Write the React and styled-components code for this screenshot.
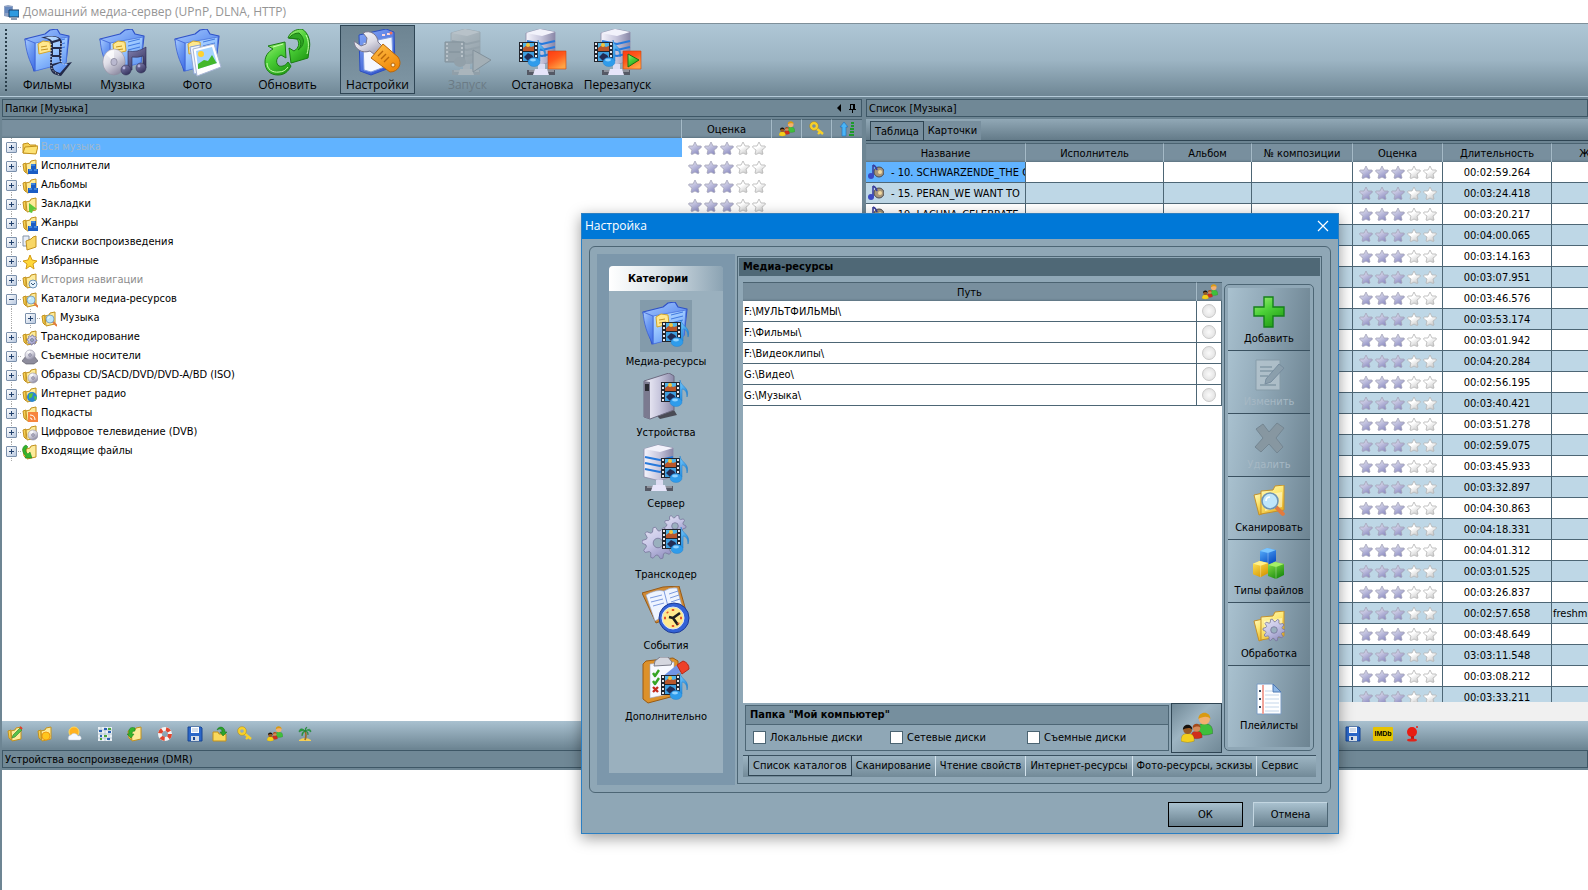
import React from "react"
import styled, { createGlobalStyle, css } from "styled-components"

const GlobalStyle = createGlobalStyle`
  * {
    box-sizing: border-box;
  }

  body {
    margin: 0;
    background: #6d8593;
    color: #000;
    font: 11px/13px "DejaVu Sans Condensed", Tahoma, sans-serif;
  }

  button, input {
    margin: 0;
    padding: 0;
    border: 0;
    background: none;
    color: inherit;
    font: inherit;
  }

  svg {
    display: block;
    flex: none;
  }
`

const line = "#3e5766"
const uiFont = `"Open Sans", "Noto Sans", sans-serif`

/* ---------- icons ---------- */

const Svg = ({ size = 16, box = size, children }) => (
  <svg width={size} height={size} viewBox={`0 0 ${box} ${box}`} aria-hidden="true">
    {children}
  </svg>
)

const Hidden = styled.svg`
  position: absolute;
`

const Grad = ({ id, from, mid, to, flat }) => (
  <linearGradient id={id} x1="0" y1="0" x2={flat ? 1 : 0.6} y2={flat ? 0 : 1}>
    <stop offset="0" stopColor={from} />
    {mid && <stop offset="0.5" stopColor={mid} />}
    <stop offset="1" stopColor={to} />
  </linearGradient>
)

const Gradients = () => (
  <Hidden width="0" height="0" aria-hidden="true">
    <defs>
      <Grad id="blue" from="#a9ccff" mid="#6f9cf3" to="#4a78e8" />
      <Grad id="deep" from="#86aaf8" to="#3457cf" />
      <Grad id="page" from="#c4e2ff" mid="#97c4ff" to="#6296f2" />
      <Grad id="yellow" from="#fffbc8" mid="#fde874" to="#e8b52c" />
      <Grad id="orange" from="#ffc04a" to="#f08a0a" />
      <Grad id="green" from="#a4f07a" mid="#4cd038" to="#25a018" />
      <Grad id="metal" from="#ffffff" mid="#dddce6" to="#8f8da4" />
      <Grad id="tower" from="#f5f4fc" mid="#c9c8de" to="#8a88a8" flat />
      <Grad id="violet" from="#8685b5" to="#37355f" />
      <Grad id="lilac" from="#e4e3f2" mid="#c9c8e8" to="#9796c4" />
      <Grad id="note" from="#7fd0ff" to="#1680d8" />
      <Grad id="red" from="#ff3a12" mid="#ff5a1c" to="#ffa445" />
      <Grad id="starOn" from="#e2e2ee" mid="#c2c2df" to="#8f8fc4" />
      <Grad id="starOff" from="#ffffff" mid="#ffffff" to="#cfcfcf" />
      <Grad id="cubeBlue" from="#5db4ff" to="#0a4fc4" />
      <Grad id="cubeGreen" from="#8be34a" to="#1c8d10" />
      <Grad id="cubeYellow" from="#ffe65c" to="#d89a06" />
      <Grad id="ghost" from="#b4bfc6" to="#94a2ab" />
    </defs>
  </Hidden>
)

const BlueFolder = () => (
  <g strokeLinejoin="round">
    <path d="m1 10 20-5 5-4 7-1 3 5 9 2-3 26-32 9Z" fill="url(#blue)" stroke="#2f52c8" strokeWidth="1.2" />
    <path d="m11 14 33-6-2 26-31 8Z" fill="url(#page)" stroke="#4a73dc" strokeWidth="0.8" />
    <path d="m1 10 10 4v28C5 32 2 22 1 10Z" fill="url(#blue)" stroke="#3a60d4" strokeWidth="0.8" />
    <path d="m14 15 5-3 7 1 1 9-12 3Z" fill="#ffe88f" stroke="#d2a52c" />
    <path d="m17 18 6-1m-6 4 7-1" stroke="#c59320" fill="none" />
    <path d="m29 13 12-3M29 17l12-3M29 21l12-3" stroke="#3f78e0" fill="none" />
  </g>
)

const FilmNote = ({ x = 19, y = 19 }) => (
  <g transform={`translate(${x} ${y})`}>
    <path d="M0 0h19v20H0Z" fill="#22252d" />
    <path d="M4 1h11v8H4Z" fill="#4fb4e8" />
    <path d="M4 10h11v9H4Z" fill="#3f9fe0" />
    <path d="m4 6 4-3 4 2 3-1v5H4Z" fill="#b9572c" />
    <circle cx="9" cy="3" r="2" fill="#f3c33c" />
    <path d="m5 15 4-4 4 2 2 3-6 3Z" fill="#222c54" />
    <path d="M2 1v18M17 1v18" stroke="#e9e9ee" strokeWidth="2" strokeDasharray="2 2" />
    <path d="M19-2c1 7 10 7 7 17 0-5-2-8-5-8v12h-2Z" fill="url(#note)" stroke="#1c7ccc" strokeWidth="0.5" />
    <ellipse cx="15" cy="20" rx="6" ry="4.5" fill="#2f9ceb" stroke="#1c7ccc" strokeWidth="0.4" />
    <ellipse cx="14" cy="18" rx="3" ry="1.4" fill="#8fd2ff" />
  </g>
)

const Server = ({ ghost }) => (
  <g strokeLinejoin="round">
    <path d="m7 4 14-4 15 3v28l-13 5-16-4Z" fill={ghost ? "url(#ghost)" : "url(#tower)"} stroke={ghost ? "#95a3ac" : "#8d8ca8"} strokeWidth="0.8" />
    <path d="m7 4 14-4 15 3-13 4Z" fill={ghost ? "#b8c2c9" : "#f2f2fb"} />
    <path d="m8 12 15 3 13-3M8 18l15 3 13-3M8 24l15 3 13-3" stroke={ghost ? "#94a2ab" : "#2679dc"} strokeWidth="2" fill="none" />
    <path d="M19 35h7v6h-7Z" fill={ghost ? "#a6b1b9" : "#dcdcf2"} />
    <path d="M8 41h28v5H8Z" fill={ghost ? "#909fa9" : "#555965"} />
    <path d="M10 42h8M28 42h7" stroke={ghost ? "#b0bbc2" : "#c7cad2"} />
    <path d="M16 40h12l2 6H14Z" fill={ghost ? "#aab5bc" : "#e6e5fa"} />
  </g>
)

const gearPath = (cx, cy, r, n) => {
  const pts = []
  for (let i = 0; i < n * 4; i++) {
    const a = (i / (n * 4)) * Math.PI * 2
    const k = i % 4 < 2 ? r : r * 0.76
    pts.push(`${(cx + Math.cos(a) * k).toFixed(1)} ${(cy + Math.sin(a) * k).toFixed(1)}`)
  }
  return `M${pts.join("L")}Z`
}

const Gear = ({ cx, cy, r, n = 9 }) => (
  <g>
    <path d={gearPath(cx, cy, r, n)} fill="url(#lilac)" stroke="#77769c" strokeWidth="0.8" strokeLinejoin="round" />
    <circle cx={cx} cy={cy} r={r * 0.3} fill="#9ab0be" stroke="#77769c" strokeWidth="0.8" />
  </g>
)

const Person = ({ x, y, s = 1, skin, hair, shirt }) => (
  <g transform={`translate(${x} ${y}) scale(${s})`}>
    <path d="M0 17c0-7 3-8 7-8s7 1 7 8q-7 3-14 0Z" fill={shirt} stroke="#00000055" strokeWidth="0.5" />
    <circle cx="7" cy="5" r="4.6" fill={skin} />
    <path d="M2 5c0-7 10-7 10 0-2-3-7-2-10 0Z" fill={hair} />
  </g>
)

const People = () => (
  <g>
    <Person x={15} y={1} s={1.2} skin="#f3b070" hair="#d99a12" shirt="#3fbf3c" />
    <Person x={10} y={12} s={0.8} skin="#d68a58" hair="#a14a1c" shirt="#cf2f1c" />
    <Person x={0} y={13} s={0.95} skin="#9a5a24" hair="#15110e" shirt="#f4cf1d" />
  </g>
)

const YellowFolder = () => (
  <g strokeLinejoin="round">
    <path d="m1 10 9-2 1 20-5 2Z" fill="url(#yellow)" stroke="#c4912a" />
    <path d="m8 6 12-1 2-4 9-1v25L8 29Z" fill="url(#yellow)" stroke="#c4912a" />
    <path d="m11 10 18-3v15l-17 4Z" fill="#fffbd6" opacity=".6" />
  </g>
)

const Lens = ({ x, y, r }) => (
  <g>
    <path d={`M${x + r * 0.7} ${y + r * 0.7}l${r * 0.9} ${r * 0.9}`} stroke="#e37b3e" strokeWidth={r * 0.5} strokeLinecap="round" />
    <circle cx={x} cy={y} r={r} fill="#bfe6fb" stroke="#6f94b4" strokeWidth={r * 0.2} />
    <path d={`M${x - r / 2} ${y}q0-${r / 2} ${r / 2}-${r / 2}`} stroke="#fff" strokeWidth={r * 0.2} fill="none" />
  </g>
)

const Cube = ({ x, y, s = 1, fill, top }) => (
  <g transform={`translate(${x} ${y}) scale(${s})`} strokeLinejoin="round">
    <path d="m0 3 7-3 9 2v11l-8 4-8-3Z" fill={fill} />
    <path d="m0 3 7-3 9 2-8 3Z" fill={top} />
    <path d="M8 5v12" stroke="#ffffff66" strokeWidth="0.8" />
  </g>
)

const Disc = ({ x, y, r }) => (
  <g>
    <circle cx={x} cy={y} r={r} fill="url(#metal)" stroke="#8f8da0" strokeWidth="0.6" />
    <path d={`M${x} ${y}L${x - r * 0.7} ${y - r * 0.6}A${r} ${r} 0 0 1 ${x} ${y - r * 0.9}Z`} fill="#fff" opacity=".7" />
    <circle cx={x} cy={y} r={r * 0.28} fill="#b9b8cf" stroke="#77768a" strokeWidth="0.6" />
  </g>
)

const big = {
  films: (
    <>
      <BlueFolder />
      <path d="M17 9c8-3 20-3 21 4l-1 20 3 2 8-2-11 14c-8-1-11-4-11-11l1-20c0-5-4-7-10-7Z" fill="#232a4a" />
      <path d="M21 9c5-2 11-2 14 1l-7 2c-1-2-4-3-7-3ZM29 14l7-2v6h-7ZM29 20h6v6h-6ZM28 28h7l1 5-8 2ZM29 37l7-3 8 1-8 9c-4-1-7-3-7-7Z" fill="url(#page)" />
      <path d="M27 15v20q0 8 9 11M37 14v18q1 4 6 3" stroke="#fff" strokeDasharray="1 2" fill="none" />
    </>
  ),
  music: (
    <>
      <BlueFolder />
      <g transform="translate(15 33) scale(0.86 1)">
        <Disc x={0} y={0} r={13} />
      </g>
      <path d="M29 22q9 2 18-4v21h-3V27q-5 2-11 1v13h-4Z" fill="url(#violet)" stroke="#2b294d" strokeWidth="0.6" />
      <circle cx="27" cy="41" r="5" fill="url(#violet)" stroke="#2b294d" strokeWidth="0.5" />
      <circle cx="42" cy="39" r="5" fill="url(#violet)" stroke="#2b294d" strokeWidth="0.5" />
      <circle cx="25" cy="39" r="1.4" fill="#b3b2dc" />
      <circle cx="40" cy="37" r="1.4" fill="#b3b2dc" />
    </>
  ),
  photo: (
    <>
      <BlueFolder />
      <path d="m16 18 10-2 2 28-8 1Z" fill="#eef4ff" stroke="#8fa6d6" />
      <path d="m19 20 21-5 7 23-24 9Z" fill="#fff" stroke="#a8b6d6" />
      <path d="m22 22 16-4 5 16-19 6Z" fill="#a6d4ff" />
      <circle cx="27" cy="25" r="3" fill="#ffd22e" />
      <path d="m24 35 6-4 4 1 4-6 4 7 1 1-19 6Z" fill="#43b82a" />
    </>
  ),
  refresh: (
    <g stroke="#1a7d12" strokeLinejoin="round" fill="url(#green)">
      <path d="m44 29-17 5-2-15 5 3c5-3 6-8 3-12l-9-1c2-6 8-9 14-9 7 4 9 14 7 21Z" />
      <path d="m25 9 10 1c3 3 2 8-1 11 6-4 8-11 1-17-4 0-8 2-10 5Z" fill="#2fa524" />
      <path d="m4 17 17-4 1 16-5-3c-6 3-5 9-2 11 4 1 7-1 9-4l3 4c-3 6-7 9-13 9C6 46 1 41 1 33c0-6 3-10 8-13Z" />
      <path d="M3 34c0 6 5 10 12 9 4 0 7-2 9-5" stroke="#caffae" fill="none" />
      <path d="m9 18 10-3M42 6c3 6 3 12 1 19" stroke="#caffae" fill="none" />
    </g>
  ),
  settings: (
    <g strokeLinejoin="round">
      <path d="m5 6 27-6 8 3 1 34-24 9-11-4Z" fill="url(#deep)" stroke="#2c4fc0" />
      <path d="m9 14 29-6 1 27-22 8-7-2Z" fill="#f4f7ff" stroke="#7d9ae0" />
      <path d="M28 6h3m2-1h3" stroke="#ffd9d9" strokeWidth="2" />
      <circle cx="37" cy="4" r="1.5" fill="#f0705a" />
      <path d="M9 4c7-4 15 2 15 9l9 9-7 8-10-8C8 25 0 20 0 12l7 5 5-2 1-6Z" fill="url(#metal)" stroke="#77768c" />
      <path d="m17 29 12-14 15 13c5 7 0 15-8 15Z" fill="url(#orange)" stroke="#b8660a" />
      <path d="m24 27 5-5m-2 8 5-5m-2 8 5-5" stroke="#b8660a" strokeWidth="1.4" />
      <circle cx="39" cy="36" r="2" fill="#fff0cc" stroke="#b8660a" />
    </g>
  ),
  start: (
    <g>
      <Server ghost />
      <path d="M1 13h19v20H1Z" fill="#94a2ab" stroke="#83929c" />
      <path d="M3 14v19M18 14v19" stroke="#b8c2c9" strokeWidth="2" strokeDasharray="2 2" />
      <path d="M5 23h11" stroke="#7f8e98" />
      <ellipse cx="16" cy="33" rx="6" ry="5" fill="#92a0a9" />
      <path d="m29 21 18 10-18 12Z" fill="#a3afb6" stroke="#82919b" strokeLinejoin="round" />
    </g>
  ),
  stop: (
    <>
      <Server />
      <FilmNote x={0} y={13} />
      <path d="M29 22h18v18H29Z" fill="url(#red)" stroke="#c9430f" strokeWidth="0.6" />
    </>
  ),
  restart: (
    <>
      <Server />
      <FilmNote x={0} y={13} />
      <path d="M29 22h18v18H29Z" fill="url(#red)" stroke="#c9430f" strokeWidth="0.6" />
      <path d="m34 25 11 6-11 7Z" fill="url(#green)" stroke="#197014" />
    </>
  ),
  resources: (
    <>
      <BlueFolder />
      <FilmNote x={20} y={20} />
    </>
  ),
  devices: (
    <>
      <path d="m14 42 18-5 3 5-17 4Z" fill="#4a4b55" />
      <path d="m2 8 25-8 5 3v34L8 46l-6-2Z" fill="url(#tower)" stroke="#6b6a80" strokeLinejoin="round" />
      <path d="m2 8 6 1v37l-6-2Z" fill="#7b7a90" />
      <path d="M3 11h4v7H3Z" fill="#2a2b33" />
      <FilmNote x={19} y={9} />
    </>
  ),
  server: (
    <>
      <g transform="translate(-5 1)">
        <Server />
      </g>
      <FilmNote x={19} y={14} />
    </>
  ),
  transcoder: (
    <>
      <Gear cx={33} cy={11} r={11} />
      <Gear cx={16} cy={28} r={16} n={10} />
      <FilmNote x={20} y={14} />
    </>
  ),
  events: (
    <g strokeLinejoin="round">
      <path d="M0 7 21 1l16-1 7 25-30 12Z" fill="#d08a34" stroke="#965a18" />
      <path d="M4 9q10-6 18-4 6-4 13-3l6 22q-8 0-13 5-6 0-15 6Z" fill="#eef4ff" stroke="#8fa6d4" strokeWidth="0.6" />
      <path d="m22 5 6 23M8 12l12-3M9 16l12-3m-10 7 11-3M27 8l9-3m-8 7 9-3m-8 7 9-3" stroke="#7d9be0" fill="none" />
      <circle cx="32" cy="32" r="15" fill="#3462d6" stroke="#1c3a96" />
      <circle cx="31" cy="32" r="11" fill="#ffe98c" stroke="#d8e4ff" />
      <path d="m38 27-7 5 5 7m-5-7-4-1" stroke="#1d1d1d" strokeWidth="2.6" fill="none" />
      <path d="M31 23v2m0 14v2m-9-9h2m14 0h2m-15-6 1 1m10 10 1 1" stroke="#e4572a" strokeWidth="2.4" />
    </g>
  ),
  extra: (
    <g strokeLinejoin="round">
      <path d="m4 4 27-3 5 3v34L6 46l-5-4V7Z" fill="#dd912a" stroke="#9a5b12" />
      <path d="m8 7 24-2v31L8 41Z" fill="#f7f9ff" stroke="#9aa8c8" strokeWidth="0.6" />
      <path d="m13 4 5-4h8l4 5-1 3-17 1Z" fill="#d5d7df" stroke="#7b7d8a" />
      <path d="m11 16 2 3 4-6M11 24l2 3 4-6" stroke="#35a423" strokeWidth="2.4" fill="none" />
      <path d="m11 30 5 5m0-5-5 5" stroke="#c62a1c" strokeWidth="2.4" />
      <path d="m20 20 16-13 5 6-16 12Z" fill="#7195e6" />
      <path d="m35 8 6-4q6 2 6 8l-7 5Z" fill="#ee4128" stroke="#b52a18" />
      <FilmNote x={19} y={18} />
    </g>
  ),
}

const mid = {
  add: <path d="M11 1h9v10h11v9H20v11h-9V20H1v-9h10Z" fill="url(#green)" stroke="#15801a" strokeWidth="1.4" />,
  edit: (
    <g opacity=".8">
      <path d="M3 1h24v30H3Z" fill="#b6c5ce" stroke="#8499a6" />
      <path d="M7 8h12M7 12h14M7 17h8M7 26h16" stroke="#8ea2ae" strokeWidth="2" />
      <path d="m13 20 13-15 5 4-13 14-6 2Z" fill="#8c9fac" stroke="#73889a" />
    </g>
  ),
  remove: <path d="m3 7 7-5 6 8 8-9 7 5-8 10 7 9-6 6-8-9-8 8-6-5 8-9Z" fill="#8797a1" stroke="#748692" strokeLinejoin="round" />,
  scan: (
    <>
      <YellowFolder />
      <Lens x={17} y={16} r={8} />
    </>
  ),
  types: (
    <>
      <Cube x={7} y={0} fill="url(#cubeBlue)" top="#7cc6ff" />
      <Cube x={0} y={13} s={0.95} fill="url(#cubeYellow)" top="#fff08a" />
      <Cube x={15} y={14} fill="url(#cubeGreen)" top="#a6ee68" />
    </>
  ),
  process: (
    <>
      <YellowFolder />
      <Gear cx={21} cy={19} r={11} n={10} />
    </>
  ),
  playlists: (
    <>
      <path d="M4 1h16l8 8v22H4Z" fill="#fdfeff" stroke="#7a9cc4" />
      <path d="M20 1v8h8Z" fill="#8fb8e6" stroke="#4d78b4" />
      <path d="M12 8h7m-7 4h14m-14 4h14m-14 4h14m-14 4h14m-14 4h14" stroke="#c4d6ea" />
      <path d="M10 2v29" stroke="#f0a49a" strokeWidth="2" />
      <path d="M6 8h2m-2 8h2m-2 8h2" stroke="#3b4a5e" strokeWidth="2" />
    </>
  ),
  people: <People />,
}

const SmallFolder = () => (
  <g stroke="#c2911d" strokeLinejoin="round">
    <path d="m1 5 3-1v10l-2-2Z" fill="#f5cf55" />
    <path d="m4 5 4-1 1-2 5-1v12l-9 2Z" fill="#fdeb9a" />
  </g>
)

const boxes = (
  <g>
    <path d="M9 5h5v5H9ZM6 10h5v5H6ZM11 10h5v5h-5Z" fill="#1a5cc4" />
    <path d="M9 6h4M7 11h3m2 0h3" stroke="#66b0f5" />
  </g>
)

const small = {
  open: (
    <g stroke="#c2911d" strokeLinejoin="round">
      <path d="M1 13V4l5-1 2 2h6v8Z" fill="#f5cf55" />
      <path d="m1 13 2-6 13-1-2 8Z" fill="#fde274" />
    </g>
  ),
  boxes: <><SmallFolder />{boxes}</>,
  bookmark: <><SmallFolder /><path d="m7 15V6l8 6-4 1-1 3Z" fill="#5cc83a" /></>,
  lists: <><path d="M1 1h6v10H1Z" fill="#e8eef8" stroke="#8594a8" /><path d="m4 6 5-2 2-2 3-1v11l-9 3Z" fill="#f8d766" stroke="#c2911d" /></>,
  favorite: <path d="m8 1 2 5 5 1-4 3 1 5-4-3-4 3 1-5-4-3 5-1Z" fill="#ffd83a" stroke="#d49a12" strokeLinejoin="round" />,
  history: <><SmallFolder /><circle cx="11" cy="11" r="4" fill="#e6f2fb" stroke="#6b93b8" /><path d="m9 10 2 2 2-2" stroke="#34597c" fill="none" /></>,
  catalog: <><SmallFolder /><Lens x={9} y={8} r={4} /></>,
  transcode: <><SmallFolder /><Gear cx={10} cy={10} r={5} n={8} /></>,
  drive: <><path d="m0 12 4-5h8l4 5-4 3H4Z" fill="#8d8c9c" stroke="#55545f" strokeWidth="0.6" /><Disc x={8} y={6} r={5} /></>,
  disc: <><SmallFolder /><Disc x={11} y={10} r={5} /></>,
  radio: <><SmallFolder /><circle cx="10" cy="10" r="5" fill="#2a86d2" /><path d="m7 7 4-1-1 4-3 2ZM12 9l3 1-2 4Z" fill="#5cc83a" /></>,
  podcast: <><SmallFolder /><path d="M6 6h10v10H6Z" fill="#f7853e" /><path d="M8 9q5 0 5 5M8 12q2 0 2 2" stroke="#fff" fill="none" /></>,
  incoming: <><SmallFolder /><path d="M4 1C-1 3 0 9 4 12l-1 2 7 0-2-6-2 2C3 8 3 5 6 3Z" fill="#35b42c" stroke="#187a18" strokeWidth="0.5" /></>,
  track: (
    <>
      <circle cx="11" cy="8" r="5" fill="#a5957a" stroke="#4b4a50" />
      <circle cx="12" cy="8" r="2" fill="#f2d9a0" />
      <path d="M5 1v11M5 1q3 1 4 5" stroke="#3a3f9c" strokeWidth="1.6" fill="none" />
      <circle cx="3" cy="12" r="3" fill="#3a49c4" />
    </>
  ),
  pencilFolder: <><SmallFolder /><path d="m5 12 1-3 7-7 2 2-7 7Z" fill="#56c24a" stroke="#2a7f2a" strokeWidth="0.6" /><path d="m13 1 2 2" stroke="#e23b2a" strokeWidth="2" /></>,
  sunFolder: <><SmallFolder /><circle cx="9" cy="10" r="4" fill="#ffc61e" stroke="#f09a12" /></>,
  weather: <><circle cx="7" cy="6" r="5" fill="#ffb21e" stroke="#ffd85c" /><path d="M2 14a3 3 0 0 1 2-5 4 4 0 0 1 7 1 2 2 0 0 1 2 4Z" fill="#f5f8fc" stroke="#b8c6d4" strokeWidth="0.5" /></>,
  grid: <><path d="M1 1h14v14H1Z" fill="#eaf0f4" /><path d="M1 4h14M1 8h14M1 12h14M4 1v14M8 1v14M12 1v14" stroke="#9ab4c4" strokeWidth="0.6" /><path d="M2 5h3M7 3h3M11 6h3M3 10h2M10 13h3" stroke="#2a62b4" strokeWidth="2" /><path d="M7 10h3M3 13h2M11 3h3" stroke="#4aa83a" strokeWidth="2" /></>,
  importFolder: <><SmallFolder /><path d="M8 2C3 0 1 4 2 8H0l4 4 3-4H5c0-2 1-3 3-3Z" fill="#35b42c" stroke="#187a18" strokeWidth="0.5" /></>,
  lifebuoy: <><circle cx="8" cy="8" r="5" fill="none" stroke="#f4f4f4" strokeWidth="4" /><circle cx="8" cy="8" r="5" fill="none" stroke="#e0462e" strokeWidth="4" strokeDasharray="4 4" /></>,
  floppy: <><path d="M1 1h13l1 1v13H1Z" fill="#2a66c8" stroke="#174594" /><path d="M4 1h8v6H4Z" fill="#fff" /><path d="M5 3h6M5 5h6" stroke="#a9bcd8" /><path d="M4 10h8v5H4Z" fill="#d3dbe6" /><path d="M6 11h2v3H6Z" fill="#174594" /></>,
  exportFolder: <><path d="M1 15V6h5l1 2h7v7Z" fill="#f9d95c" stroke="#c2911d" /><path d="M5 4c2-5 8-3 8 2h2l-4 4-3-4h2c0-3-2-4-5-2Z" fill="#2ba42b" stroke="#187018" strokeWidth="0.5" /></>,
  key: <g fill="none" stroke="#b98a0c"><circle cx="5" cy="5" r="3" stroke="#f7d029" strokeWidth="2.4" /><path d="m7 7 7 6m-3-2-2 2" stroke="#f7d029" strokeWidth="2.4" /><circle cx="5" cy="5" r="4.4" strokeWidth="0.5" /></g>,
  people: <g transform="scale(0.5)"><People /></g>,
  palm: <><path d="M2 14q6-4 12 0v1H2Z" fill="#f5cf55" /><path d="M8 5q2 4 0 9" stroke="#9a6a24" strokeWidth="1.6" fill="none" /><path d="M8 5C5 1 2 3 2 6q3-2 6-1-4 1-3 5 1-3 3-5 3 1 3 4 1-4-3-4 3-2 6 1 0-5-6-1l2-4q-2 0-2 4Z" fill="#27a03a" stroke="#1c8030" strokeWidth="0.5" /></>,
  sort: <><path d="m5 1 4 5H7v9H3V6H1Z" fill="#4ab4f5" stroke="#1c6cb8" strokeWidth="0.6" /><path d="M12 2h3M12 5h3M11 8h4M11 11h4M10 14h5" stroke="#1f9a2c" strokeWidth="2" /></>,
  ball: <><circle cx="7" cy="6" r="5" fill="#e81c12" /><circle cx="12" cy="1" r="1" fill="#e81c12" /><path d="M6 10h3v3H6Z" fill="#c01610" /><ellipse cx="7" cy="14" rx="5" ry="1.6" fill="#e0241a" /></>,
}

const starPath = "m7 1 2 4 4 0c1 1 0 2-3 4l1 4c-1 1-2 0-4-1-2 1-3 2-4 1l1-4C1 7 0 6 1 5l4 0Z"

const StarRow = styled.span`
  display: flex;
  gap: 2px;
`

const Rating = ({ value = 3 }) => (
  <StarRow role="img" aria-label={`${value} / 5`}>
    {[1, 2, 3, 4, 5].map((n) => (
      <Svg key={n} size={14}>
        <path
          d={starPath}
          fill={n <= value ? "url(#starOn)" : "url(#starOff)"}
          stroke={n <= value ? "#a3a3b8" : "#b4b4b4"}
          strokeWidth="0.8"
          strokeLinejoin="round"
        />
      </Svg>
    ))}
  </StarRow>
)

/* ---------- window ---------- */

const Window = styled.div`
  position: relative;
  display: flex;
  flex-direction: column;
  height: 100vh;
  overflow: hidden;
`

const TitleBar = styled.header`
  display: flex;
  align-items: center;
  gap: 4px;
  height: 23px;
  padding-left: 3px;
  background: #fff;
  color: #959595;
  font: 12px/16px ${uiFont};
`

const Toolbar = styled.nav`
  display: flex;
  height: 74px;
  padding: 1px 0 2px 5px;
  border-top: 1px solid #7f909a;
  border-bottom: 1px solid #b4cad8;
  background: linear-gradient(#afc7d6, #9db5c4 50%, #6e8694);
`

const Grip = styled.span`
  align-self: center;
  width: 2px;
  height: 62px;
  margin-right: 3px;
  background: repeating-linear-gradient(#2b3f4c 0 2px, transparent 2px 4px);
`

const ToolGroup = styled.div`
  display: flex;
  margin-right: 15px;
`

const ToolButton = styled.button`
  display: flex;
  flex-direction: column;
  align-items: center;
  width: 75px;
  padding-top: 3px;
  font: 12px/16px ${uiFont};
  border: 1px solid transparent;

  ${({ $active }) =>
    $active &&
    css`
      border-color: #2f4655;
      background: linear-gradient(#6d8492, #8097a5);
    `}

  &:disabled {
    color: #6b7b85;
  }
`

const Panes = styled.main`
  display: flex;
  flex: 1;
  gap: 4px;
  min-height: 0;
  padding: 2px 0 0 2px;
`

const Pane = styled.section`
  display: flex;
  flex-direction: column;
  min-width: 0;
  flex: ${({ $width }) => ($width ? `0 0 ${$width}px` : 1)};
`

const PaneTitle = styled.h2`
  display: flex;
  flex: none;
  align-items: center;
  justify-content: space-between;
  height: 18px;
  margin: 0 0 2px;
  padding: 0 4px 0 2px;
  border: 1px solid ${line};
  background: #708896;
  font-size: 11px;
  font-weight: normal;
`

const PaneActions = styled.span`
  display: flex;
  gap: 4px;
`

const Body = styled.div`
  flex: 1;
  min-height: 0;
  overflow: hidden;
  background: #fff;
`

const Table = styled.table`
  width: ${({ $width }) => $width || "100%"};
  table-layout: fixed;
  border-collapse: separate;
  border-spacing: 0;
`

const Th = styled.th`
  height: 19px;
  padding: 0;
  border-right: 1px solid #a5bac7;
  border-top: 1px solid #4b6371;
  background: #788f9e;
  box-shadow: inset 0 -2px 2px -1px #5d7482;
  font-weight: normal;
  text-align: center;

  &:last-child {
    border-right: 0;
  }

  svg {
    margin: 0 auto;
  }
`

const TreeCell = styled.td`
  height: 19px;
  padding: 0;

  & > ${StarRow} {
    padding-left: 6px;
  }
`

const TreeRow = styled.div`
  display: flex;
  align-items: center;
  height: 19px;
  padding-left: ${({ $level }) => ($level ? 23 : 4)}px;
  background: ${({ $level }) =>
    $level ? "repeating-linear-gradient(#aaa 0 1px, transparent 1px 2px) 9px 0 / 1px 100% no-repeat" : "none"};
`

const Branch = styled.span`
  display: flex;
  align-items: center;
  width: 16px;
  height: 19px;
  background:
    repeating-linear-gradient(#aaa 0 1px, transparent 1px 2px) 5px 0 / 1px 100% no-repeat,
    repeating-linear-gradient(90deg, #aaa 0 1px, transparent 1px 2px) 0 9px / 100% 1px no-repeat;
`

const Expander = styled.button`
  display: flex;
  width: 11px;
  height: 11px;
  border: 1px solid #7b90ab;
  border-radius: 1px;
  background: linear-gradient(135deg, #fff, #b9c9e0);
`

const TreeLabel = styled.span`
  flex: 1;
  margin-left: 2px;
  padding: 2px 1px 4px;
  color: ${({ $muted }) => ($muted ? "#8c8c8c" : "inherit")};

  ${({ $selected }) =>
    $selected &&
    css`
      background: #61b3ff;
      color: #9fb8cd;
    `}
`

const IconBar = styled.div`
  display: flex;
  flex: none;
  align-items: center;
  height: 27px;
  padding: 0 0 2px ${({ $start = 0 }) => $start}px;
  background: linear-gradient(#a9c1d0, #6f8795);
`

const IconButton = styled.button`
  display: flex;
  justify-content: center;
  width: ${({ $narrow }) => ($narrow ? 20 : 30)}px;
`

const BarIcons = styled.div`
  display: flex;
  margin-left: -2px;
`

const Imdb = styled.span`
  padding: 0 1px;
  border-radius: 1px;
  background: #e6c300;
  font: bold 7px/14px "Liberation Sans Narrow", "Liberation Sans", sans-serif;
`

const TabStrip = styled.div`
  display: flex;
  flex: none;
  height: 22px;
  margin-bottom: 2px;
  padding: 2px 0 0 4px;
  border-bottom: 1px solid #2f4553;
  background: linear-gradient(#91a8b6, #647b89);
`

const ListTab = styled.button`
  padding: 0 4px;
  background: #788f9e;
  border: solid #2f4553;
  border-width: ${({ $active }) => ($active ? "1px 1px 0" : 0)};
`

const Td = styled.td`
  height: 21px;
  padding: 0 1px;
  border: 1px solid #4d6675;
  border-top: 0;
  border-left: 0;
  overflow: hidden;
  white-space: nowrap;
  text-align: ${({ $center }) => ($center ? "center" : "left")};
  background: ${({ $selected }) => ($selected ? "#61b3ff" : "none")};

  & > ${StarRow} {
    padding-left: 5px;
  }
`

const ListRow = styled.tr`
  &:nth-child(even) {
    background: #bed7e6;
  }
`

const TrackName = styled.span`
  display: flex;
  align-items: center;
  gap: 7px;
  padding-left: 1px;
`

const ScrollTrack = styled.div`
  flex: none;
  height: 19px;
  background: #f0f0f0;
`

const BottomPane = styled.section`
  display: flex;
  flex-direction: column;
  flex: none;
  height: 142px;
  padding: 2px 0 0 2px;
`

/* ---------- dialog ---------- */

const Dialog = styled.div`
  position: absolute;
  left: 581px;
  top: 213px;
  width: 758px;
  border: 1px solid #2b7fc3;
  background: #8fa7b6;
  box-shadow: 0 4px 14px rgba(0, 0, 0, 0.4);
`

const DialogTitle = styled.div`
  display: flex;
  align-items: center;
  justify-content: space-between;
  height: 25px;
  padding: 0 9px 2px 3px;
  background: #0078d7;
  color: #fff;
  font: 12px/16px ${uiFont};
`

const DialogFrame = styled.div`
  display: flex;
  gap: 2px;
  margin: 7px;
  padding: 7px 8px 7px 7px;
  height: 547px;
  border: 1px solid #4d6675;
  border-radius: 6px;
`

const Sidebar = styled.nav`
  flex: 0 0 138px;
  padding: 12px;
  background: #7c97ab;
`

const Categories = styled.div`
  height: 100%;
  border-radius: 4px 4px 0 0;
  background: #9ab0be;
`

const CategoriesTitle = styled.h3`
  height: 25px;
  margin: 0 0 9px;
  padding: 0 16px 0 0;
  border-radius: 4px 4px 0 0;
  background: linear-gradient(90deg, #fff, #dfe7ec 40%, #8ba3b3);
  font-size: 11px;
  line-height: 26px;
  text-align: center;
`

const Category = styled.button`
  display: flex;
  flex-direction: column;
  align-items: center;
  gap: 3px;
  width: 100%;
  height: 71px;
`

const CategoryIcon = styled.span`
  padding: 2px;
  background: ${({ $active }) => ($active ? "#839bab" : "none")};
`

const Page = styled.section`
  display: flex;
  flex: 1;
  flex-direction: column;
  min-width: 0;
  padding: 1px;
  margin: 2px 0 1px;
  border: 1px solid #4d6675;
`

const PageTitle = styled.h3`
  flex: none;
  height: 18px;
  margin: 0 0 6px;
  padding-left: 4px;
  background: #4f6876;
  font-size: 11px;
  line-height: 18px;
`

const PageColumns = styled.div`
  display: flex;
  flex: 1;
  gap: 2px;
  min-height: 0;
  padding: 0 6px 0 4px;
`

const PathColumn = styled.div`
  display: flex;
  flex: 1;
  flex-direction: column;
  min-width: 0;
`

const Lamp = styled.span`
  display: block;
  width: 14px;
  height: 14px;
  margin: 0 auto;
  border: 1px solid #c9c9c9;
  border-radius: 50%;
  background: radial-gradient(#fafafa, #dcdcdc);
`

const FolderRow = styled.div`
  display: flex;
  gap: 2px;
  height: 50px;
  padding-left: 2px;
`

const FolderGroup = styled.fieldset`
  flex: 1;
  min-width: 0;
  margin: 2px 0;
  padding: 0;
  border: 1px solid #4d6675;
`

const FolderTitle = styled.div`
  height: 19px;
  padding-left: 4px;
  border-bottom: 1px solid #4d6675;
  background: #768f9e;
  font-weight: bold;
  line-height: 18px;
`

const Checks = styled.div`
  display: flex;
  padding: 6px 0 0 7px;
`

const Check = styled.label`
  display: flex;
  align-items: center;
  gap: 4px;
  width: 137px;
`

const Checkbox = styled.input`
  appearance: none;
  width: 13px;
  height: 13px;
  border: 1px solid #4b6472;
  background: #fff;
`

const PeopleButton = styled.button`
  display: flex;
  align-items: center;
  justify-content: center;
  width: 51px;
  border: 1px solid #2f4553;
  background: linear-gradient(135deg, #708896, #9db4c2 40%, #718997);
`

const ActionColumn = styled.div`
  flex: none;
  align-self: flex-start;
  width: 90px;
  margin-top: 2px;
  padding: 3px;
  border: 1px solid #4d6675;
  border-radius: 5px;
`

const Action = styled.button`
  display: flex;
  flex-direction: column;
  align-items: center;
  justify-content: center;
  gap: 4px;
  width: 100%;
  height: 63px;
  padding-top: 2px;
  border-bottom: 1px solid #3a5160;
  background: linear-gradient(100deg, #a9c1cf, #93abba 40%, #6d8492);

  &:last-child {
    height: 81px;
    border-bottom: 0;
  }

  &:disabled {
    color: #a6b8c4;
  }
`

const PageTabs = styled.div`
  display: flex;
  flex: none;
  height: 22px;
  margin: 2px 4px 5px;
  padding-left: 5px;
  border-top: 1px solid #3a5160;
  background: linear-gradient(#9db5c3, #728a98);
`

const PageTab = styled.button`
  height: 20px;
  padding: 0 4px 1px 4px;
  border-right: 1px solid #d3e2ec;

  &:last-child {
    border-right: 0;
  }

  ${({ $active }) =>
    $active &&
    css`
      border: solid #2f4553;
      border-width: 0 1px 1px;
      background: #8fa7b6;
    `}
`

const DialogButtons = styled.div`
  display: flex;
  justify-content: flex-end;
  gap: 10px;
  padding: 2px 10px 6px;
`

const DialogButton = styled.button`
  width: 75px;
  height: 25px;
  border: 1px solid;
  border-color: ${({ $default }) => ($default ? "#000" : "#c3d6e1 #4d6675 #4d6675 #c3d6e1")};
  background: linear-gradient(#a9c1cf, #69818f);
`

/* ---------- data ---------- */

const tools = [
  [["films", "Фильмы"], ["music", "Музыка"], ["photo", "Фото"]],
  [["refresh", "Обновить"]],
  [["settings", "Настройки"]],
  [["start", "Запуск"], ["stop", "Остановка"], ["restart", "Перезапуск"]],
]

const tree = [
  ["open", "Вся музыка"],
  ["boxes", "Исполнители"],
  ["boxes", "Альбомы"],
  ["bookmark", "Закладки"],
  ["boxes", "Жанры"],
  ["lists", "Списки воспроизведения"],
  ["favorite", "Избранные"],
  ["history", "История навигации"],
  ["catalog", "Каталоги медиа-ресурсов"],
  ["catalog", "Музыка", 1],
  ["transcode", "Транскодирование"],
  ["drive", "Съемные носители"],
  ["disc", "Образы CD/SACD/DVD/DVD-A/BD (ISO)"],
  ["radio", "Интернет радио"],
  ["podcast", "Подкасты"],
  ["disc", "Цифровое телевидение (DVB)"],
  ["incoming", "Входящие файлы"],
]

const names = ["- 10. SCHWARZENDE_THE GATE", "- 15. PERAN_WE WANT TO", "- 19. LACUNA_CELEBRATE"]

const durations = [
  "00:02:59.264", "00:03:24.418", "00:03:20.217", "00:04:00.065", "00:03:14.163",
  "00:03:07.951", "00:03:46.576", "00:03:53.174", "00:03:01.942", "00:04:20.284",
  "00:02:56.195", "00:03:40.421", "00:03:51.278", "00:02:59.075", "00:03:45.933",
  "00:03:32.897", "00:04:30.863", "00:04:18.331", "00:04:01.312", "00:03:01.525",
  "00:03:26.837", "00:02:57.658", "00:03:48.649", "03:03:11.548", "00:03:08.212",
  "00:03:33.211",
]

const genres = { 21: "freshmp3" }

const listColumns = [
  ["Название", 160],
  ["Исполнитель", 138],
  ["Альбом", 88],
  ["№ композиции", 101],
  ["Оценка", 90],
  ["Длительность", 109],
  ["Жанр", 84],
]

const bottomIcons = [
  ["pencilFolder", "Изменить"],
  ["sunFolder", "Новая папка"],
  ["weather", "Погода"],
  ["grid", "Таблица"],
  ["importFolder", "Импорт"],
  ["lifebuoy", "Помощь"],
  ["floppy", "Сохранить"],
  ["exportFolder", "Экспорт"],
  ["key", "Доступ"],
  ["people", "Пользователи"],
  ["palm", "Отдых"],
]

const categories = [
  ["resources", "Медиа-ресурсы"],
  ["devices", "Устройства"],
  ["server", "Сервер"],
  ["transcoder", "Транскодер"],
  ["events", "События"],
  ["extra", "Дополнительно"],
]

const paths = ["F:\\МУЛЬТФИЛЬМЫ\\", "F:\\Фильмы\\", "F:\\Видеоклипы\\", "G:\\Видео\\", "G:\\Музыка\\"]

const actions = [
  ["add", "Добавить"],
  ["edit", "Изменить", true],
  ["remove", "Удалить", true],
  ["scan", "Сканировать"],
  ["types", "Типы файлов"],
  ["process", "Обработка"],
  ["playlists", "Плейлисты"],
]

const pageTabs = [
  "Список каталогов",
  "Сканирование",
  "Чтение свойств",
  "Интернет-ресурсы",
  "Фото-ресурсы, эскизы",
  "Сервис",
]

/* ---------- parts ---------- */

const MainToolbar = () => (
  <Toolbar>
    <Grip />
    {tools.map((group) => (
      <ToolGroup key={group[0][0]}>
        {group.map(([icon, label]) => (
          <ToolButton key={icon} $active={icon === "settings"} disabled={icon === "start"}>
            <Svg size={48}>{big[icon]}</Svg>
            {label}
          </ToolButton>
        ))}
      </ToolGroup>
    ))}
  </Toolbar>
)

const FolderTree = () => (
  <Pane $width={860}>
    <PaneTitle>
      Папки [Музыка]
      <PaneActions>
        <Svg size={9}><path d="M6 0v8L2 4Z" /></Svg>
        <Svg size={9}><path d="M2 0h5v5h1v1H5v3H4V6H1V5h1Zm1 1v4h2V1Z" /></Svg>
      </PaneActions>
    </PaneTitle>
    <Body>
      <Table>
        <colgroup>
          <col />
          <col width="90" />
          <col width="30" />
          <col width="30" />
          <col width="30" />
        </colgroup>
        <thead>
          <tr>
            <Th aria-label="Папка" />
            <Th>Оценка</Th>
            <Th aria-label="Пользователи"><Svg>{small.people}</Svg></Th>
            <Th aria-label="Доступ"><Svg>{small.key}</Svg></Th>
            <Th aria-label="Порядок"><Svg>{small.sort}</Svg></Th>
          </tr>
        </thead>
        <tbody>
          {tree.map(([icon, label, level], i) => (
            <tr key={i}>
              <TreeCell>
                <TreeRow $level={level}>
                  <Branch>
                    <Expander aria-label={label}>
                      <Svg size={9}>
                        <path d={i === 8 ? "M2 4h5v1H2Z" : "M2 4h2V2h1v2h2v1H5v2H4V5H2Z"} fill="#23426e" />
                      </Svg>
                    </Expander>
                  </Branch>
                  <Svg>{small[icon]}</Svg>
                  <TreeLabel $selected={i === 0} $muted={i === 7}>{label}</TreeLabel>
                </TreeRow>
              </TreeCell>
              <TreeCell><Rating /></TreeCell>
              <TreeCell colSpan={3} />
            </tr>
          ))}
        </tbody>
      </Table>
    </Body>
    <IconBar>
      <BarIcons>
        {bottomIcons.map(([icon, label]) => (
          <IconButton key={icon} $narrow={icon === "exportFolder"} aria-label={label}>
            <Svg>{small[icon]}</Svg>
          </IconButton>
        ))}
      </BarIcons>
    </IconBar>
  </Pane>
)

const TrackList = () => (
  <Pane>
    <PaneTitle>Список [Музыка]</PaneTitle>
    <TabStrip>
      <ListTab $active>Таблица</ListTab>
      <ListTab>Карточки</ListTab>
    </TabStrip>
    <Body>
      <Table $width="770px">
        <colgroup>
          {listColumns.map(([name, width]) => (
            <col key={name} width={width} />
          ))}
        </colgroup>
        <thead>
          <tr>
            {listColumns.map(([name]) => (
              <Th key={name}>{name}</Th>
            ))}
          </tr>
        </thead>
        <tbody>
          {durations.map((time, i) => (
            <ListRow key={i}>
              <Td $selected={i === 0}>
                <TrackName>
                  <Svg>{small.track}</Svg>
                  {names[i]}
                </TrackName>
              </Td>
              <Td />
              <Td />
              <Td />
              <Td><Rating /></Td>
              <Td $center>{time}</Td>
              <Td>{genres[i]}</Td>
            </ListRow>
          ))}
        </tbody>
      </Table>
    </Body>
    <ScrollTrack />
    <IconBar $start={472}>
      <IconButton aria-label="Сохранить"><Svg>{small.floppy}</Svg></IconButton>
      <IconButton><Imdb>IMDb</Imdb></IconButton>
      <IconButton aria-label="Кинопоиск"><Svg>{small.ball}</Svg></IconButton>
    </IconBar>
  </Pane>
)

const SettingsDialog = () => (
  <Dialog role="dialog" aria-label="Настройка">
    <DialogTitle>
      Настройка
      <button aria-label="Закрыть">
        <Svg size={12}><path d="m1 1 10 10M11 1 1 11" stroke="#fff" strokeWidth="1.2" /></Svg>
      </button>
    </DialogTitle>

    <DialogFrame>
      <Sidebar>
        <Categories>
          <CategoriesTitle>Категории</CategoriesTitle>
          {categories.map(([icon, label], i) => (
            <Category key={icon}>
              <CategoryIcon $active={i === 0}>
                <Svg size={48}>{big[icon]}</Svg>
              </CategoryIcon>
              {label}
            </Category>
          ))}
        </Categories>
      </Sidebar>

      <Page>
        <PageTitle>Медиа-ресурсы</PageTitle>
        <PageColumns>
          <PathColumn>
            <Body>
              <Table>
                <colgroup>
                  <col />
                  <col width="25" />
                </colgroup>
                <thead>
                  <tr>
                    <Th>Путь</Th>
                    <Th aria-label="Пользователи"><Svg>{small.people}</Svg></Th>
                  </tr>
                </thead>
                <tbody>
                  {paths.map((path) => (
                    <tr key={path}>
                      <Td>{path}</Td>
                      <Td><Lamp /></Td>
                    </tr>
                  ))}
                </tbody>
              </Table>
            </Body>
            <FolderRow>
              <FolderGroup aria-label="Папка">
                <FolderTitle>Папка "Мой компьютер"</FolderTitle>
                <Checks>
                  <Check><Checkbox type="checkbox" />Локальные диски</Check>
                  <Check><Checkbox type="checkbox" />Сетевые диски</Check>
                  <Check><Checkbox type="checkbox" />Съемные диски</Check>
                </Checks>
              </FolderGroup>
              <PeopleButton aria-label="Пользователи">
                <Svg size={32}>{mid.people}</Svg>
              </PeopleButton>
            </FolderRow>
          </PathColumn>
          <ActionColumn>
            {actions.map(([icon, label, disabled]) => (
              <Action key={icon} disabled={disabled}>
                <Svg size={32}>{mid[icon]}</Svg>
                {label}
              </Action>
            ))}
          </ActionColumn>
        </PageColumns>
        <PageTabs>
          {pageTabs.map((tab, i) => (
            <PageTab key={tab} $active={i === 0}>{tab}</PageTab>
          ))}
        </PageTabs>
      </Page>
    </DialogFrame>

    <DialogButtons>
      <DialogButton $default>ОК</DialogButton>
      <DialogButton>Отмена</DialogButton>
    </DialogButtons>
  </Dialog>
)

export default () => {
  return (
    <>
      <GlobalStyle />
      <Gradients />

      <Window>
        <TitleBar>
          <Svg>
            <path d="M1 2 5 1l5 1v10l-5 1-4-1Z" fill="#8fa2c4" />
            <path d="M2 4h7M2 6h7M2 8h7" stroke="#3d6eb8" />
            <path d="M6 6h10v7H6Z" fill="#2d9be0" stroke="#1d3f66" />
            <path d="M8 15h6" stroke="#1d3f66" />
          </Svg>
          Домашний медиа-сервер (UPnP, DLNA, HTTP)
        </TitleBar>
        <MainToolbar />
        <Panes>
          <FolderTree />
          <TrackList />
        </Panes>
        <BottomPane>
          <PaneTitle>Устройства воспроизведения (DMR)</PaneTitle>
          <Body />
        </BottomPane>
        <SettingsDialog />
      </Window>
    </>
  )
}
